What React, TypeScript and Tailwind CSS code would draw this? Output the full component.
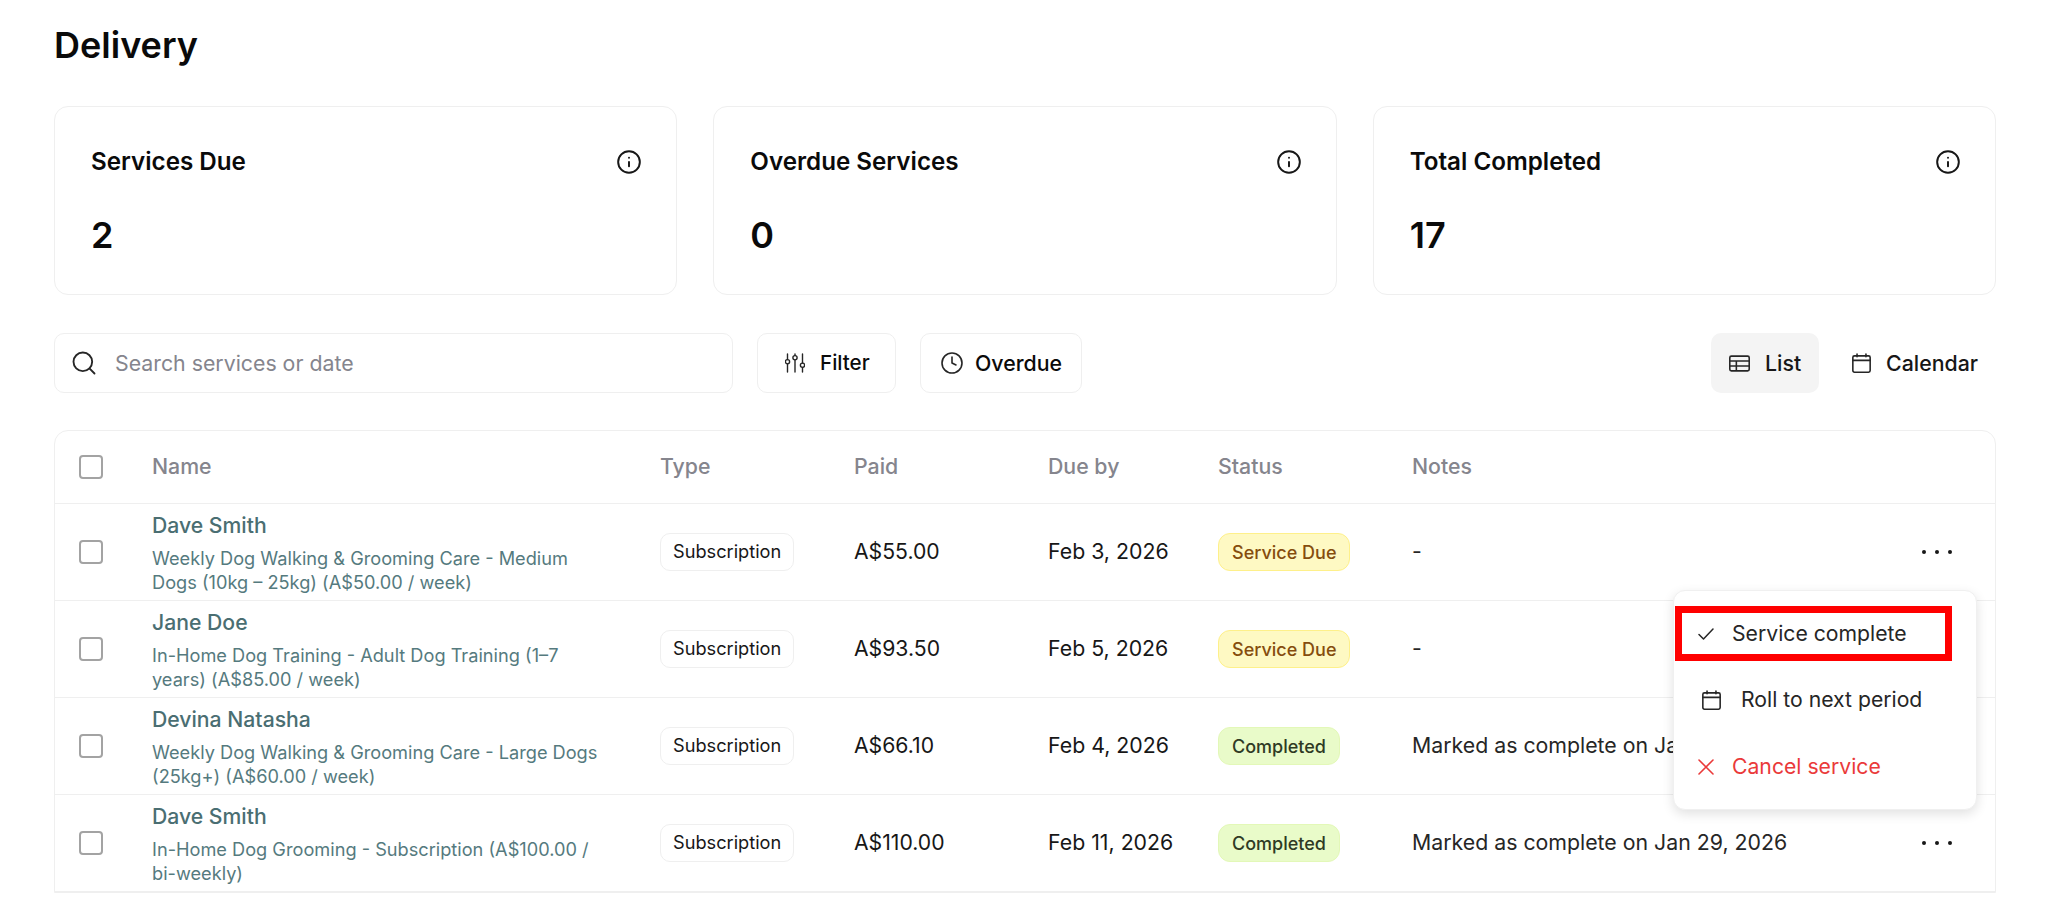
import { Clock, Info, Search } from "lucide-react";

const rows = [
  { name: "Dave Smith", desc: ["Weekly Dog Walking & Grooming Care - Medium", "Dogs (10kg – 25kg) (A$50.00 / week)"], paid: "A$55.00", due: "Feb 3, 2026", status: "Service Due", notes: "-" },
  { name: "Jane Doe", desc: ["In-Home Dog Training - Adult Dog Training (1–7", "years) (A$85.00 / week)"], paid: "A$93.50", due: "Feb 5, 2026", status: "Service Due", notes: "-" },
  { name: "Devina Natasha", desc: ["Weekly Dog Walking & Grooming Care - Large Dogs", "(25kg+) (A$60.00 / week)"], paid: "A$66.10", due: "Feb 4, 2026", status: "Completed", notes: "Marked as complete on Jan 29, 2026" },
  { name: "Dave Smith", desc: ["In-Home Dog Grooming - Subscription (A$100.00 /", "bi-weekly)"], paid: "A$110.00", due: "Feb 11, 2026", status: "Completed", notes: "Marked as complete on Jan 29, 2026" },
];

const cols = "grid grid-cols-[97px_508px_194px_194px_170px_194px_1fr] items-center";

function CalendarIcon({ className }: { className?: string }) {
  return (
    <svg viewBox="0 0 20 20" fill="none" stroke="currentColor" strokeWidth="1.5" strokeLinecap="round" className={className}>
      <rect x="1.75" y="2.75" width="16.5" height="15.5" rx="1.5" />
      <path d="M1.75 7h16.5M5.75 1v2.5M14.25 1v2.5" />
    </svg>
  );
}

function TableIcon({ className }: { className?: string }) {
  return (
    <svg viewBox="0 0 20 20" fill="none" stroke="currentColor" strokeWidth="1.5" className={className}>
      <rect x="0.75" y="3" width="18.5" height="14" rx="1.5" />
      <path d="M0.75 7.6h18.5M0.75 12.4h18.5M7 7.6V17" />
    </svg>
  );
}

function SlidersIcon({ className }: { className?: string }) {
  return (
    <svg viewBox="0 0 20 20" fill="none" stroke="currentColor" strokeWidth="1.4" strokeLinecap="round" className={className}>
      <path d="M2.5 1v5.5M2.5 11v8M10 1v1.5M10 7v12M17.5 1v9M17.5 14.5V19" />
      <circle cx="2.5" cy="8.75" r="2.1" />
      <circle cx="10" cy="4.75" r="2.1" />
      <circle cx="17.5" cy="12.25" r="2.1" />
    </svg>
  );
}

function Stat({ label, value }: { label: string; value: string }) {
  return (
    <div className="h-[189px] rounded-[14px] border border-[#efefef] px-[36px] pt-[39px]">
      <div className="flex items-center justify-between">
        <span className="text-[24.2px] leading-[32px] font-semibold text-[#0a0a0a]">{label}</span>
        <Info className="mr-[-2px] h-[26px] w-[26px] text-[#171717]" strokeWidth={1.8} />
      </div>
      <div className="mt-[35px] text-[36px] leading-[44px] font-semibold text-[#0a0a0a]">{value}</div>
    </div>
  );
}

export default function App() {
  return (
    <div className="h-[898px] overflow-hidden bg-white pr-[52px] pl-[54px] font-['Inter',sans-serif]">
      <h1 className="pt-[21px] text-[36px] leading-[48px] font-semibold text-[#0a0a0a]">Delivery</h1>

      <div className="mt-[37px] grid grid-cols-3 gap-[36px]">
        <Stat label="Services Due" value="2" />
        <Stat label="Overdue Services" value="0" />
        <Stat label="Total Completed" value="17" />
      </div>

      <div className="mt-[38px] flex h-[60px] items-stretch gap-[24px]">
        <div className="flex w-[679px] items-center gap-[17px] rounded-[10px] border border-[#efefef] pl-[15px]">
          <Search className="h-[28px] w-[28px] text-[#262626]" strokeWidth={1.6} />
          <span className="pt-[1px] text-[21.3px] text-[#85858d]">Search services or date</span>
        </div>
        <div className="flex w-[139px] items-center gap-[15px] rounded-[10px] border border-[#efefef] pl-[27px]">
          <SlidersIcon className="h-[20px] w-[20px] text-[#262626]" />
          <span className="pt-[1px] text-[20.6px] font-medium text-[#0a0a0a]">Filter</span>
        </div>
        <div className="flex w-[162px] items-center justify-center gap-[11px] rounded-[10px] border border-[#efefef]">
          <Clock className="h-[24px] w-[24px] text-[#262626]" strokeWidth={1.6} />
          <span className="pt-[1px] text-[21.3px] font-medium text-[#0a0a0a]">Overdue</span>
        </div>
        <div className="ml-auto flex items-stretch gap-[14px]">
          <div className="flex w-[108px] items-center justify-center gap-[15px] rounded-[10px] bg-[#f4f4f4]">
            <TableIcon className="h-[21px] w-[21px] text-[#262626]" />
            <span className="pt-[1px] text-[21.3px] font-medium text-[#171717]">List</span>
          </div>
          <div className="flex items-center gap-[14px] pr-[18px] pl-[18px]">
            <CalendarIcon className="h-[21px] w-[21px] text-[#262626]" />
            <span className="pt-[1px] text-[21.3px] font-medium text-[#171717]">Calendar</span>
          </div>
        </div>
      </div>

      <div className="relative mt-[37px] rounded-t-[14px] border border-[#efefef]">
        <div className={`${cols} h-[73px] border-b border-[#efefef] text-[21.3px] font-medium text-[#85858d]`}>
          <div className="pl-[24px]">
            <div className="h-[24px] w-[24px] rounded-[4px] border-2 border-[#a3a3a3]" />
          </div>
          <div>Name</div>
          <div>Type</div>
          <div>Paid</div>
          <div>Due by</div>
          <div>Status</div>
          <div>Notes</div>
        </div>

        {rows.map((r, i) => (
          <div key={i} className={`${cols} h-[97px] border-b border-[#efefef]`}>
            <div className="pl-[24px]">
              <div className="h-[24px] w-[24px] rounded-[4px] border-2 border-[#a3a3a3]" />
            </div>
            <div>
              <div className="text-[21.2px] leading-[28px] font-medium text-[#4a6e72]">{r.name}</div>
              <div className="mt-[7px] text-[18.2px] leading-[24px] text-[#557a7e]">
                {r.desc[0]}
                <br />
                {r.desc[1]}
              </div>
            </div>
            <div>
              <span className="inline-flex h-[38px] items-center rounded-[10px] border border-[#efefef] px-[12px] text-[18.2px] text-[#171717]">Subscription</span>
            </div>
            <div className="text-[21.2px] text-[#171717]">{r.paid}</div>
            <div className="text-[21.3px] text-[#171717]">{r.due}</div>
            <div>
              {r.status === "Completed" ? (
                <span className="inline-flex h-[38px] items-center rounded-[12px] border border-[#e3f8b8] bg-[#e9fbc9] px-[13px] text-[18px] font-medium text-[#2f3a24]">{r.status}</span>
              ) : (
                <span className="inline-flex h-[38px] items-center rounded-[12px] border border-[#fef08a] bg-[#fef9c3] px-[13px] text-[18px] font-medium text-[#854d0e]">{r.status}</span>
              )}
            </div>
            <div className="flex items-center justify-between pr-[43px] text-[21.3px] text-[#262626]">
              <span>{r.notes}</span>
              <span className="flex gap-[8.5px]">
                <i className="h-[4.5px] w-[4.5px] rounded-full bg-[#171717]" />
                <i className="h-[4.5px] w-[4.5px] rounded-full bg-[#171717]" />
                <i className="h-[4.5px] w-[4.5px] rounded-full bg-[#171717]" />
              </span>
            </div>
          </div>
        ))}

        <div className="absolute top-[159px] right-[18px] w-[304px] rounded-[12px] border border-[#f0f0f0] bg-white pt-[21px] pr-[23px] pb-[20px] pl-[24px] text-[21.2px] shadow-[0_4px_12px_rgba(0,0,0,0.12)]">
          <div className="flex h-[44px] items-center gap-[18px] text-[#262626]">
            <svg viewBox="0 0 16 16" fill="none" stroke="currentColor" strokeWidth="1.5" strokeLinecap="round" strokeLinejoin="round" className="h-[16px] w-[16px]">
              <path d="M1 8.5 5.5 13 15 3" />
            </svg>
            <span>Service complete</span>
          </div>
          <div className="absolute top-[15px] left-[1px] h-[55px] w-[277px] border-[7px] border-[#ff0000]" />
          <div className="mt-[22px] flex h-[44px] items-center gap-[19px] pl-[3px] text-[#262626]">
            <CalendarIcon className="h-[21px] w-[21px]" />
            <span>Roll to next period</span>
          </div>
          <div className="mt-[23px] flex h-[44px] items-center gap-[18px] text-[#ea3a3a]">
            <svg viewBox="0 0 16 16" fill="none" stroke="currentColor" strokeWidth="1.6" strokeLinecap="round" className="h-[16px] w-[16px]">
              <path d="M1 1l14 14M15 1 1 15" />
            </svg>
            <span>Cancel service</span>
          </div>
        </div>
      </div>
    </div>
  );
}
